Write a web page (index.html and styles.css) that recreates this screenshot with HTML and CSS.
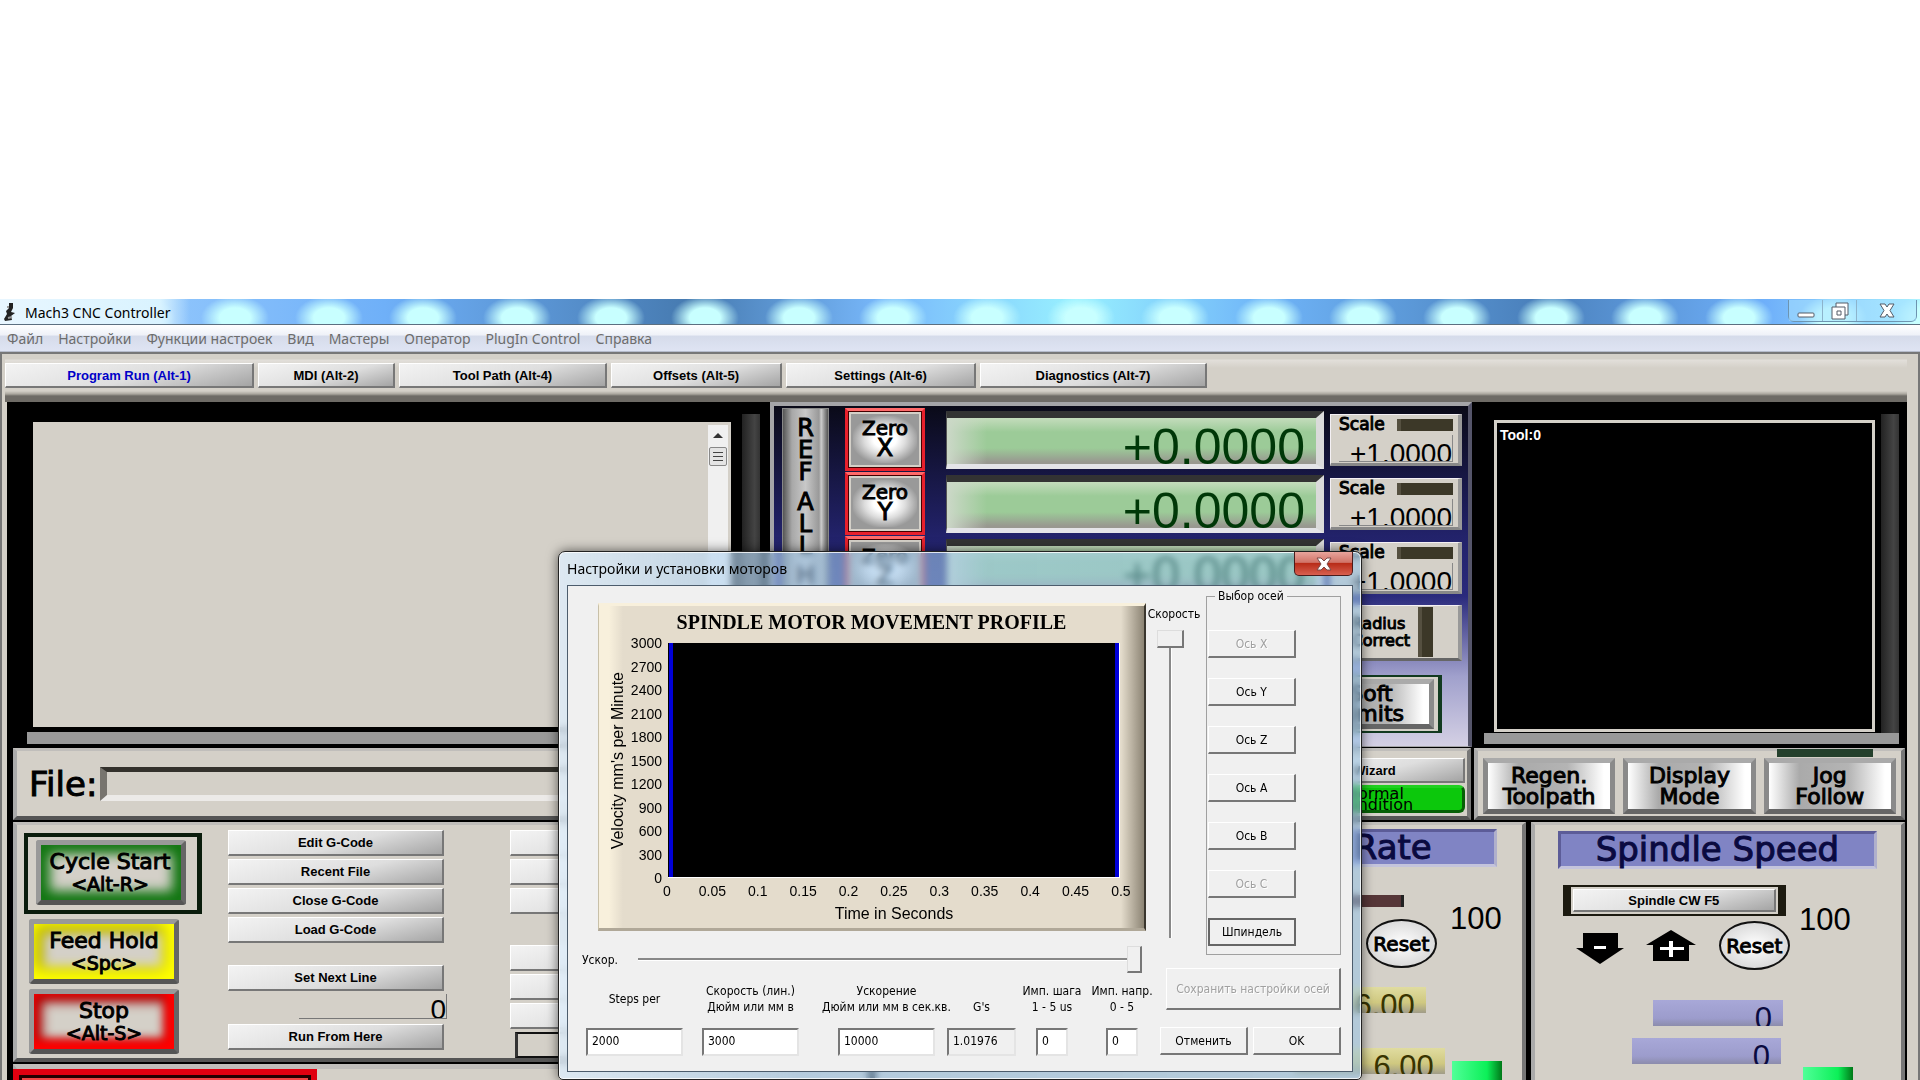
FILE: index.html
```html
<!DOCTYPE html>
<html lang="ru">
<head>
<meta charset="UTF-8">
<meta name="viewport" content="width=device-width, initial-scale=1.0">
<title>Mach3 CNC Controller</title>
<link rel="stylesheet" href="styles.css">
</head>
<body>
<div class="app">
    <header class="titlebar">
        <svg class="app-icon" width="14" height="20" viewBox="0 0 14 20"><path d="M6 1l4 0 0 5-2 4 4 1-4 3 1 4-7 1-1-2 3-5-1-3 3-3z" fill="#222"/><path d="M4 5l2 0M5 16l4-1" stroke="#999" stroke-width="2"/></svg>
        <h1>Mach3 CNC Controller</h1>
        <div class="win-controls">
            <button class="win-btn" aria-label="Minimize"><svg width="18" height="16" viewBox="0 0 18 16"><rect x="1" y="10" width="16" height="4" rx="1" fill="#fff" stroke="#555c68"/></svg></button>
            <button class="win-btn" aria-label="Restore"><svg width="18" height="18" viewBox="0 0 18 18"><g fill="#fff" stroke="#555c68"><path d="M5 1h12v12h-3v4H1V5h4z"/><path d="M5 5h9v8M6 9h4v4H6z"/></g></svg></button>
            <button class="win-btn win-close" aria-label="Close"><svg width="16" height="15" viewBox="0 0 16 15"><path d="M1 1h5l2 3 2-3h5l-4 6.500 4 6.500h-5l-2-3-2 3H1l4-6.500z" fill="#fff" stroke="#555c68"/></svg></button>
        </div>
    </header>
    <nav class="menubar">
        <a href="#">Файл</a>
        <a href="#">Настройки</a>
        <a href="#">Функции настроек</a>
        <a href="#">Вид</a>
        <a href="#">Мастеры</a>
        <a href="#">Оператор</a>
        <a href="#">PlugIn Control</a>
        <a href="#">Справка</a>
    </nav>

    <div class="frame">
        <div class="tabs">
            <button class="flat active">Program Run (Alt-1)</button>
            <button class="flat">MDI (Alt-2)</button>
            <button class="flat">Tool Path (Alt-4)</button>
            <button class="flat">Offsets (Alt-5)</button>
            <button class="flat">Settings (Alt-6)</button>
            <button class="flat">Diagnostics (Alt-7)</button>
        </div>

        <main class="screen">
            <div class="upper">
                <section class="well">
                    <div class="listing">
                        <div class="scroll">
                            <span class="scroll-up"></span>
                            <span class="scroll-thumb"></span>
                        </div>
                    </div>
                </section>

                <section class="dro-panel">
                    <button class="ref-all"><span>R</span><span>E</span><span>F</span><span class="word">A</span><span>L</span><span>L</span><span class="word">H</span></button>
                    <div class="axes">
                        <div class="axis">
                            <button class="zero"><span>Zero<br><b>X</b></span></button>
                            <div class="dro"><output>+0.0000</output></div>
                            <div class="scale"><span class="scale-name">Scale</span><i class="led"></i><output>+1.0000</output></div>
                        </div>
                        <div class="axis">
                            <button class="zero"><span>Zero<br><b>Y</b></span></button>
                            <div class="dro"><output>+0.0000</output></div>
                            <div class="scale"><span class="scale-name">Scale</span><i class="led"></i><output>+1.0000</output></div>
                        </div>
                        <div class="axis">
                            <button class="zero"><span>Zero<br><b>Z</b></span></button>
                            <div class="dro"><output>+0.0000</output></div>
                            <div class="scale"><span class="scale-name">Scale</span><i class="led"></i><output>+1.0000</output></div>
                        </div>
                        <div class="radius"><span>Radius<br>Correct</span><i class="led tall"></i></div>
                        <div class="soft"><button class="chrome">Soft<br>Limits</button></div>
                    </div>
                </section>

                <section class="well">
                    <div class="toolview">Tool:0</div>
                </section>
            </div>

            <div class="middle">
                <section class="panel file">
                    <label for="file">File:</label>
                    <input type="text" id="file" class="file-box">
                </section>
                <section class="panel wizard">
                    <button class="flat">Wizard</button>
                    <div class="condition">Normal<br>Condition</div>
                </section>
                <section class="panel view-btns">
                    <button class="chrome">Regen.<br>Toolpath</button>
                    <button class="chrome">Display<br>Mode</button>
                    <button class="chrome follow">Jog<br>Follow</button>
                </section>
            </div>

            <div class="lower">
                <div class="left-stack">
                    <section class="panel run">
                        <div class="run-col">
                            <div class="start-led"><button class="big green">Cycle Start<small>&lt;Alt-R&gt;</small></button></div>
                            <button class="big yellow">Feed Hold<small>&lt;Spc&gt;</small></button>
                            <button class="big red">Stop<small>&lt;Alt-S&gt;</small></button>
                        </div>
                        <div class="code-col">
                            <button class="flat">Edit G-Code</button>
                            <button class="flat">Recent File</button>
                            <button class="flat">Close G-Code</button>
                            <button class="flat">Load G-Code</button>
                            <button class="flat gap-top">Set Next Line</button>
                            <output class="line-no">0</output>
                            <button class="flat">Run From Here</button>
                        </div>
                        <div class="code-col toggles">
                            <button class="flat" aria-label="Rewind"></button>
                            <button class="flat" aria-label="Single block"></button>
                            <button class="flat" aria-label="Reverse run"></button>
                            <button class="flat gap-top" aria-label="Block delete"></button>
                            <button class="flat" aria-label="Optional stop"></button>
                            <button class="flat" aria-label="Flood"></button>
                            <i class="flood-led"></i>
                        </div>
                    </section>
                    <section class="panel reset-strip">
                        <div class="estop"></div>
                    </section>
                </div>

                <section class="panel rate">
                    <h2>Feed Rate</h2>
                    <i class="bar"></i>
                    <div class="override">
                        <button class="reset">Reset</button>
                        <output>100</output>
                    </div>
                    <output class="num yellow-num">6.00</output>
                    <output class="num yellow-num wide">6.00</output>
                    <i class="go"></i>
                </section>

                <section class="panel spindle">
                    <h2>Spindle Speed</h2>
                    <div class="cw"><button class="flat">Spindle CW F5</button></div>
                    <div class="override">
                        <button class="arrow" aria-label="Slower"><svg width="48" height="31" viewBox="0 0 48 31"><path d="M7 0h35v15h6L24 31 0 15h7z"/><path d="M18 13h12v3H18z" fill="#fff"/></svg></button>
                        <button class="arrow up" aria-label="Faster"><svg width="50" height="31" viewBox="0 0 50 31"><path d="M25 0l25 15h-7v16H7V15H0z"/><path d="M14 17h9v-6h4v6h11v3H27v7h-4v-7h-9z" fill="#fff"/></svg></button>
                        <button class="reset">Reset</button>
                        <output>100</output>
                    </div>
                    <output class="num blue-num">0</output>
                    <output class="num blue-num wide">0</output>
                    <i class="go"></i>
                </section>
            </div>
        </main>
    </div>
</div>

<div class="dialog" role="dialog" aria-labelledby="dlg-title">
    <div class="dialog-head">
        <span id="dlg-title">Настройки и установки моторов</span>
        <button class="dialog-close" aria-label="Закрыть"><svg width="16" height="14" viewBox="0 0 16 14"><path d="M1 1h4l3 3 3-3h4l-4 6 4 6h-4l-3-3-3 3H1l4-6z" fill="#fff" stroke="#7a4a48"/></svg></button>
    </div>
    <div class="dialog-body">
        <div class="motor">
            <div class="chart">
                <h3>SPINDLE MOTOR MOVEMENT PROFILE</h3>
                <div class="chart-grid">
                    <div class="y-name"><span>Velocity mm's per Minute</span></div>
                    <div class="y-axis">
                        <span>3000</span><span>2700</span><span>2400</span><span>2100</span><span>1800</span><span>1500</span><span>1200</span><span>900</span><span>600</span><span>300</span><span>0</span>
                    </div>
                    <div class="plot"></div>
                    <div class="x-axis">
                        <span>0</span><span>0.05</span><span>0.1</span><span>0.15</span><span>0.2</span><span>0.25</span><span>0.3</span><span>0.35</span><span>0.4</span><span>0.45</span><span>0.5</span>
                    </div>
                    <div class="x-name">Time in Seconds</div>
                </div>
            </div>
            <div class="accel">
                <label for="accel">Ускор.</label>
                <input type="range" id="accel" min="0" max="100" value="100">
            </div>
            <div class="fields">
                <div class="field"><label for="steps">Steps per</label><input type="text" id="steps" value="2000"></div>
                <div class="field"><label for="vel">Скорость (лин.)<br>Дюйм или мм в</label><input type="text" id="vel" value="3000"></div>
                <div class="field"><label for="acc">Ускорение<br>Дюйм или мм в сек.кв.</label><input type="text" id="acc" value="10000"></div>
                <div class="field gs"><label for="gs"><br>G's</label><input type="text" id="gs" value="1.01976" readonly></div>
                <div class="field tiny"><label for="pulse">Имп. шага<br>1 - 5 us</label><input type="text" id="pulse" value="0"></div>
                <div class="field tiny"><label for="dir">Имп. напр.<br>0 - 5</label><input type="text" id="dir" value="0"></div>
            </div>
        </div>
        <div class="side">
            <div class="side-top">
                <div class="speed">
                    <label for="speed">Скорость</label>
                    <input type="range" id="speed" min="0" max="100" value="100">
                </div>
                <fieldset>
                    <legend>Выбор осей</legend>
                    <button class="btn" disabled>Ось X</button>
                    <button class="btn">Ось Y</button>
                    <button class="btn">Ось Z</button>
                    <button class="btn">Ось A</button>
                    <button class="btn">Ось B</button>
                    <button class="btn" disabled>Ось C</button>
                    <button class="btn selected">Шпиндель</button>
                </fieldset>
            </div>
            <button class="btn save" disabled>Сохранить настройки осей</button>
            <div class="answers">
                <button class="btn">Отменить</button>
                <button class="btn">OK</button>
            </div>
        </div>
    </div>
</div>
</body>
</html>
```
FILE: styles.css
```css
* {
    box-sizing: border-box;
}
body {
    margin: 0;
    height: 100vh;
    overflow: hidden;
    background-color: #fff;
    color: #000;
    font-family: "Liberation Sans", Arial, sans-serif;
    position: relative;
}
h1, h2, h3 {
    margin: 0;
    font-weight: normal;
}
button {
    padding: 0;
    font-family: inherit;
    color: #000;
}
a {
    text-decoration: none;
}

/* main window */
.app {
    margin-top: 299px;
    height: calc(100vh - 299px);
    display: flex;
    flex-direction: column;
}
.titlebar {
    flex: none;
    height: 26px;
    display: flex;
    align-items: center;
    padding: 1px 0 0 3px;
    gap: 8px;
    border-bottom: 1px solid #5c6f80;
    background:
        linear-gradient(90deg, #e8f6ff 0, #d9f3ff 160px, transparent 190px),
        radial-gradient(ellipse 34px 22px at 50% 75%, #c8ffff 45%, transparent) 0 0 / 94px 100%,
        linear-gradient(90deg, #a6d4ff, #6fb0f8 20%, #467ab0 36%, #78b8fb 46%, #98f0ff 56%, #6fb4f8 66%, #4a80bb 80%, #6fb0fa 92%, #a8f0ff);
}
.titlebar h1 {
    flex: 1;
    font: 14px "Noto Sans", sans-serif;
}
.win-controls {
    align-self: flex-start;
    display: flex;
    height: 22px;
    margin-right: 3px;
    border: 1px solid #6d94b0;
    border-top: 0;
    border-radius: 0 0 6px 6px;
}
.win-btn {
    width: 34px;
    border: 0;
    border-right: 1px solid #8db4cc;
    background: rgba(170, 225, 255, 0.5);
    display: flex;
    align-items: center;
    justify-content: center;
}
.win-close {
    width: 59px;
    border-right: 0;
}
.menubar {
    flex: none;
    height: 27px;
    display: flex;
    gap: 15px;
    padding-left: 7px;
    line-height: 27px;
    font-family: "Noto Sans", sans-serif;
    font-size: 14px;
    background: linear-gradient(#fff, #eef1f8 38%, #d5dbea 40%, #dfe4f3 95%, #9ea4b4);
}
.menubar a {
    color: #6d6d6d;
}
.frame {
    flex: 1;
    min-height: 0;
    display: flex;
    flex-direction: column;
    border: solid #777;
    border-width: 2px 2px 0 2px;
    padding: 0 11px 0 5px;
    background-color: #d4d0c8;
}
.tabs {
    flex: none;
    display: grid;
    grid-template-columns: 249fr 137fr 208fr 171fr 190fr 227fr 696fr;
    gap: 4px;
    height: 48px;
    padding: 9px 0 14px;
    margin-left: -2px;
    background: linear-gradient(#d4d0c8 5px, #e2dfda 6px, #d4d0c8 14px, #d4d0c8 37px, #aaa69e 40px, #6e6b66 42px, #6e6b66);
}
.flat {
    font-weight: bold;
    font-size: 13px;
    border: 1px solid #fff;
    border-right: 2px solid #777;
    border-bottom: 2px solid #777;
    background: linear-gradient(165deg, #f3f3f3, #dedede 55%, #a4a4a4);
}
.tabs .active {
    color: #0000c8;
}

.screen {
    flex: 1;
    min-height: 0;
    display: flex;
    flex-direction: column;
    background-color: #000;
}
.upper {
    flex: none;
    height: 345px;
    display: grid;
    grid-template-columns: 763fr 702fr 435fr;
}
.well {
    padding: 20px 39px 15px 26px;
    background:
        linear-gradient(#999, #999) 20px 330px / calc(100% - 30px) 12px no-repeat,
        linear-gradient(90deg, #222, #444 70%, #333) right 10px top 12px / 18px 320px no-repeat,
        #000;
}
.well:last-child {
    padding: 18px 32px 15px 22px;
    background:
        linear-gradient(#999, #999) 12px 331px / calc(100% - 20px) 11px no-repeat,
        linear-gradient(90deg, #222, #444 70%, #333) right 8px top 12px / 18px 320px no-repeat,
        #000;
}
.listing {
    height: 305px;
    background-color: #d4d0c8;
    display: flex;
    justify-content: flex-end;
    padding: 3px 3px 0 0;
}
.scroll {
    width: 20px;
    background-color: #f0f0f0;
    display: flex;
    flex-direction: column;
    align-items: center;
}
.scroll-up {
    margin: 8px 0 9px;
    border: solid transparent;
    border-width: 0 5px 5px;
    border-bottom-color: #333;
}
.scroll-thumb {
    width: 18px;
    height: 19px;
    border: 1px solid #888;
    border-radius: 2px;
    background: repeating-linear-gradient(#444 0 1px, #e4e4e4 1px 4px) center / 10px 10px no-repeat, #e4e4e4;
}
.toolview {
    height: 312px;
    border: 3px solid #d4d0c8;
    padding: 4px 3px;
    color: #fff;
    font-weight: bold;
    font-size: 14px;
}

/* engraved lettering of the screen set */
.zero, .ref-all, .scale-name, .radius, .chrome, .file, .big, .reset, .panel h2 {
    font-family: "DejaVu Sans", sans-serif;
    font-weight: normal;
    -webkit-text-stroke: 1px currentColor;
}

/* axis read-outs */
.dro-panel {
    border: 4px solid #a5a5a8;
    border-right-color: #55556a;
    border-bottom-width: 1px;
    padding: 2px 6px 0 8px;
    display: flex;
    gap: 16px;
    background: linear-gradient(#0a0a18, #22226a 130px, #2a2a7c 190px, #a0a0cc 270px, #d4d0e4);
}
.ref-all {
    flex: none;
    width: 47px;
    height: 330px;
    display: flex;
    flex-direction: column;
    align-items: center;
    padding-top: 8px;
    border: 1px solid #888;
    font-size: 24px;
    line-height: 22px;
    background: linear-gradient(90deg, #555, #a8a8a8 20%, #c8c8c8 50%, #999 80%, #ccc 85%, #555);
}
.ref-all .word {
    margin-top: 8px;
}
.axes {
    flex: 1;
    display: flex;
    flex-direction: column;
    align-items: flex-end;
}
.axis {
    width: 100%;
    height: 64px;
    display: flex;
}
.zero {
    width: 80px;
    height: 63px;
    border: 3px solid #e8202c;
    border-top-color: #ff6a6a;
    padding: 3px;
    background-color: #d4d0c8;
    outline: 1px solid #400;
    outline-offset: -4px;
    font-size: 20px;
    line-height: 18px;
}
.zero span {
    display: block;
    height: 51px;
    padding-top: 3px;
    border: 2px solid #999;
    background: radial-gradient(#fff 25%, #ddd 45%, #999 75%);
}
.zero b {
    font-weight: normal;
    font-size: 24px;
    line-height: 22px;
}
.dro {
    flex: 1;
    height: 58px;
    margin: 3px 6px 0 21px;
    border: solid;
    border-color: #333 #dadada #e4e4e8 #555;
    border-width: 7px 8px 5px 1px;
    overflow: hidden;
    text-align: right;
    padding: 4px 11px 0 0;
    font-size: 50px;
    line-height: 50px;
    color: #003808;
    background:
        linear-gradient(90deg, #ccd8c8, transparent 40px),
        linear-gradient(#c4dcbc, #9ccb98 14px, #9ccb98 30px, #989890 44px);
}
.scale {
    width: 132px;
    height: 52px;
    margin-top: 6px;
    padding: 0 5px 0 8px;
    border: 1px solid #f4f0f4;
    border-right: 4px solid #999;
    border-bottom: 3px solid #888;
    display: flex;
    flex-wrap: wrap;
    justify-content: space-between;
    overflow: hidden;
    background-color: #d4d0c8;
}
.scale-name {
    font-size: 17px;
    line-height: 19px;
}
.led {
    width: 56px;
    height: 12px;
    margin-top: 4px;
    background-color: #3c3828;
    border-left: 4px solid #555040;
}
.scale output {
    width: 100%;
    height: 27px;
    overflow: hidden;
    font-size: 28px;
    line-height: 38px;
    text-align: right;
    border-right: 1px solid #888;
    border-bottom: 1px solid #888;
}
.radius {
    width: 180px;
    height: 56px;
    margin-top: 5px;
    padding-right: 25px;
    border: 1px solid #f4f0f4;
    border-right: 4px solid #999;
    border-bottom: 3px solid #666;
    display: flex;
    align-items: center;
    justify-content: flex-end;
    gap: 8px;
    background-color: #d4d0c8;
    font-size: 16px;
    line-height: 17px;
}
.led.tall {
    width: 15px;
    height: 50px;
    margin: 0;
}
.soft {
    margin: 14px 20px 0 0;
    width: 140px;
    height: 58px;
    border: 2px solid #123a20;
    border-right-width: 4px;
    padding: 2px 4px;
    background-color: #d4d0c8;
}
.soft .chrome {
    width: 100%;
    height: 50px;
    line-height: 20px;
}
.chrome {
    border: 5px solid #8a8a8a;
    border-top-color: #aaa;
    border-bottom-color: #666;
    font-size: 22px;
    line-height: 21px;
    background: linear-gradient(90deg, #fff, #aaa 25%, #b4b4b4 65%, #fff 95%);
}

/* file, wizard and view buttons */
.middle {
    flex: none;
    height: 72px;
    margin-top: 1px;
    padding: 0 2px 0 6px;
    display: grid;
    grid-template-columns: 982fr 476fr 432fr;
    gap: 3px;
}
.panel {
    border: 4px solid #aaa;
    border-top: 3px solid #c0bebb;
    border-bottom: 4px solid #555;
    border-right-color: #777;
    background-color: #d4d0c8;
}
.file {
    display: flex;
    align-items: center;
    padding-left: 12px;
    gap: 3px;
    font-size: 34px;
}
.file-box {
    flex: 1;
    height: 34px;
    border: solid;
    border-color: #33312c #aaa #eceae8 #77746e;
    border-width: 5px 0 6px 7px;
    background-color: #d4d0c8;
}
.wizard {
    padding: 7px 2px 0 0;
    display: flex;
    flex-direction: column;
    align-items: flex-end;
    gap: 2px;
}
.wizard .flat {
    width: 180px;
    height: 25px;
}
.condition {
    width: 180px;
    height: 28px;
    border-radius: 6px;
    border: 3px solid #066006;
    border-top-color: #20d020;
    background-color: #0cc80c;
    text-align: center;
    font: 16px/11px "DejaVu Sans", sans-serif;
}
.view-btns {
    display: grid;
    grid-template-columns: 1fr 1fr 1fr;
    gap: 8px;
    padding: 7px 5px 2px;
}
.follow {
    position: relative;
}
.follow::before {
    content: "";
    position: absolute;
    left: 8px;
    right: 18px;
    top: -14px;
    height: 8px;
    background-color: #24402c;
}

/* run controls */
.lower {
    flex: 1;
    min-height: 0;
    margin-top: 2px;
    padding: 0 2px 0 6px;
    display: grid;
    grid-template-columns: 857fr 650fr 374fr;
    gap: 5px;
}
.left-stack {
    display: flex;
    flex-direction: column;
    gap: 2px;
}
.run {
    height: 240px;
    display: flex;
    padding: 5px 7px 0;
}
.run-col {
    width: 178px;
    display: flex;
    flex-direction: column;
    gap: 5px;
    margin: 3px 26px 0 0;
}
.start-led {
    height: 81px;
    border: 4px solid #0a1c0c;
    border-right-width: 5px;
    padding: 3px 9px 3px 8px;
}
.big {
    width: 150px;
    height: 65px;
    margin-left: 5px;
    border: 5px solid #999;
    border-right-color: #666;
    border-bottom-color: #555;
    border-radius: 3px;
    font-size: 22px;
    line-height: 22px;
    white-space: nowrap;
}
.big small {
    display: block;
    font-size: 19px;
}
.start-led .big {
    margin-left: 0;
    text-indent: -2px;
}
.green {
    background: #d4d0c8;
    box-shadow: inset 0 0 12px 9px #127612;
}
.yellow {
    background: #d4d0c8;
    box-shadow: inset -4px -4px 14px 6px #ff0, inset 0 0 12px 9px #b0a800;
}
.red {
    background: #d4d0c8;
    box-shadow: inset -4px -4px 10px 5px #f00, inset 0 0 12px 8px #a00000;
}
.code-col {
    width: 216px;
    display: flex;
    flex-direction: column;
    gap: 4px;
    margin-right: 66px;
}
.code-col .flat {
    flex: none;
    height: 26px;
    margin-bottom: -1px;
}
.code-col .gap-top {
    margin-top: 19px;
}
.toggles .gap-top {
    margin-top: 28px;
}
.line-no {
    height: 25px;
    margin: 0 -3px 1px 71px;
    overflow: hidden;
    text-align: right;
    font-size: 28px;
    line-height: 31px;
    border-right: 1px solid #777;
    border-bottom: 1px solid #777;
}
.flood-led {
    height: 28px;
    margin-left: 5px;
    border: 2px solid #111;
    border-left: 3px solid #333;
}
.reset-strip {
    flex: 1;
    border-top-width: 5px;
}
.estop {
    width: 304px;
    height: 40px;
    margin-left: -4px;
    border: 6px solid #e00010;
    box-shadow: inset 0 0 0 3px #200, inset 0 0 0 6px #e44;
    background-color: #d4d0c8;
}

.panel h2 {
    height: 38px;
    border: 3px solid #5c5c98;
    border-right-color: #b0b0cc;
    border-bottom-color: #c4c4dc;
    background-color: #8084c4;
    color: #0a0a40;
    text-align: center;
    font-size: 34px;
    line-height: 30px;
    white-space: nowrap;
}
.rate, .spindle {
    display: flex;
    flex-direction: column;
    align-items: flex-end;
    border-bottom: 0;
}
.rate {
    padding: 4px 25px 0 0;
}
.rate h2 {
    width: 300px;
    margin-bottom: 28px;
}
.bar {
    width: 200px;
    height: 12px;
    margin-right: 93px;
    background-color: #563638;
    border-right: 3px solid #222;
}
.override {
    display: flex;
    align-items: flex-start;
}
.override output {
    width: 65px;
    height: 40px;
    text-align: right;
    font-size: 31px;
}
.reset {
    width: 71px;
    height: 49px;
    border: 2px solid #111;
    border-radius: 50%;
    font-size: 20px;
    background: radial-gradient(#fff, #ccc);
}
.rate .override {
    height: 86px;
    margin: -6px -5px 0 0;
}
.rate .override .reset {
    margin-top: 18px;
}
.num {
    flex: none;
    height: 26px;
    overflow: hidden;
    text-align: right;
    padding-right: 11px;
    font-size: 31px;
    line-height: 37px;
}
.yellow-num {
    width: 150px;
    margin-right: 71px;
    color: #383400;
    background: linear-gradient(#e0dca0, #cfc880 60%, #a09c88);
}
.yellow-num.wide {
    margin: 35px 52px 0 0;
}
.go {
    flex: none;
    width: 50px;
    height: 30px;
    background: linear-gradient(90deg, #50ff98, #0cf058 70%, #007818);
}
.rate .go {
    margin: -13px -5px 0 0;
}
.spindle {
    padding: 6px 24px 0 23px;
}
.spindle h2 {
    width: 100%;
}
.cw {
    width: 223px;
    height: 31px;
    align-self: flex-start;
    margin: 16px 0 0 5px;
    border: solid #1c1a10;
    border-width: 2px 8px;
    padding: 2px;
}
.cw .flat {
    width: 100%;
    height: 100%;
}
.spindle .override {
    height: 84px;
    width: 100%;
    padding-left: 18px;
}
.arrow {
    flex: none;
    width: 48px;
    border: 0;
    background: none;
    margin: 17px 22px 0 0;
}
.arrow.up {
    margin: 14px 25px 0 0;
}
.spindle .reset {
    flex: none;
    margin-top: 5px;
}
.spindle .override output {
    width: 61px;
    margin-top: -14px;
}
.blue-num {
    width: 130px;
    margin-right: 94px;
    color: #0a0a40;
    background: linear-gradient(#a8a8d8, #9c9ccc 70%, #8c8cac);
}
.blue-num.wide {
    width: 149px;
    margin: 12px 96px 0 0;
}
.spindle .go {
    margin: 3px 24px 0 0;
}

/* motor tuning dialog */
.dialog {
    position: absolute;
    top: 551px;
    left: 558px;
    width: 804px;
    height: 529px;
    padding: 0 8px 8px;
    border: 1px solid #222;
    border-radius: 7px 7px 5px 5px;
    background: linear-gradient(90deg, rgba(222, 236, 248, 0.85), rgba(160, 200, 235, 0.6) 30%, rgba(150, 195, 230, 0.55));
    backdrop-filter: blur(3px);
    box-shadow: 0 0 12px rgba(0, 0, 0, 0.6), inset 0 0 0 1px rgba(255, 255, 255, 0.8);
    font: 12px/16px "DejaVu Sans Condensed", "DejaVu Sans", sans-serif;
}
.dialog-head {
    height: 33px;
    display: flex;
    justify-content: space-between;
    font: 14px/34px "Noto Sans", sans-serif;
}
.dialog-close {
    width: 59px;
    height: 24px;
    border: 1px solid #4a1c1c;
    border-top: 0;
    border-radius: 0 0 5px 5px;
    background: linear-gradient(#e8a49c, #d07468 45%, #b82c18 50%, #d86050);
    display: flex;
    align-items: center;
    justify-content: center;
}
.dialog-body {
    height: 487px;
    display: flex;
    justify-content: space-between;
    padding: 0 11px 0 14px;
    border: 1px solid #4c5c6c;
    background-color: #f0f0f0;
    line-height: 16px;
}
.motor {
    width: 564px;
}
.chart {
    height: 328px;
    margin: 17px 0 15px 16px;
    padding-top: 4px;
    border: solid;
    border-color: #f8f0dc #3a362e #b0a898 #c8c0a8;
    border-width: 3px 2px 3px 1px;
    background: linear-gradient(90deg, #f8f0dc 10px, #e4dccc 24px, #e4dccc 522px, #8c8474);
}
.chart h3 {
    font: bold 20px/24px "Liberation Serif", serif;
    text-align: center;
}
.chart-grid {
    display: grid;
    grid-template-columns: 38px 31px 452px;
    grid-template-rows: 235px 24px 20px;
    font: 14px/16px "Liberation Sans", sans-serif;
    margin-top: 9px;
}
.y-name {
    display: flex;
    align-items: center;
    justify-content: center;
    font-size: 16px;
}
.y-name span {
    writing-mode: vertical-rl;
    transform: rotate(180deg);
    white-space: nowrap;
}
.y-axis {
    display: flex;
    flex-direction: column;
    justify-content: space-between;
    align-items: flex-end;
    margin: -8px 6px -8px -6px;
}
.plot {
    border: solid #fff;
    border-width: 0 1px 1px 0;
    background:
        linear-gradient(#0000d8, #0000d8) left 1px top / 4px 100% no-repeat,
        linear-gradient(#0000d8, #0000d8) right top / 4px 100% no-repeat,
        #000;
}
.x-axis {
    grid-column: 3;
    display: flex;
    justify-content: space-between;
    padding-top: 5px;
    margin: 0 -1px;
}
.x-axis span {
    width: 0;
    display: flex;
    justify-content: center;
}
.x-name {
    grid-column: 3;
    text-align: center;
    font-size: 16px;
    line-height: 24px;
}
input[type=range] {
    appearance: none;
    margin: 0;
    background: linear-gradient(#888 0 2px, #fff 2px) center / 100% 3px no-repeat;
}
input[type=range]::-webkit-slider-thumb {
    appearance: none;
    width: 15px;
    height: 27px;
    background-color: #f0f0f0;
    border: 1px solid #ddd;
    border-right: 2px solid #777;
    border-bottom: 2px solid #777;
}
.accel {
    height: 27px;
    display: flex;
    align-items: center;
    justify-content: space-between;
}
#accel {
    width: 504px;
    height: 27px;
    margin-right: 4px;
}
.fields {
    display: grid;
    grid-template-columns: 116px 136px 109px 89px 70px 32px;
    margin: 10px 0 0 4px;
}
.field {
    width: 97px;
    display: flex;
    flex-direction: column;
    align-items: center;
}
.gs {
    width: 69px;
}
.tiny {
    width: 32px;
}
.field label {
    height: 45px;
    display: flex;
    flex-direction: column;
    justify-content: center;
    padding-bottom: 13px;
    text-align: center;
    white-space: nowrap;
}
.field input {
    width: 100%;
    height: 28px;
    padding: 0 4px 2px;
    border: 2px solid #777;
    border-right-color: #e4e4e4;
    border-bottom-color: #e4e4e4;
    background-color: #fff;
    font: inherit;
}
.field input[readonly] {
    background-color: #f0f0f0;
}
.side {
    width: 195px;
    display: flex;
    flex-direction: column;
    align-items: flex-end;
}
.side-top {
    width: 100%;
    height: 370px;
    display: flex;
    justify-content: space-between;
}
.speed {
    width: 56px;
    padding-top: 20px;
    display: flex;
    flex-direction: column;
    align-items: center;
    gap: 8px;
}
#speed {
    writing-mode: vertical-lr;
    direction: rtl;
    width: 27px;
    height: 308px;
    margin-right: 8px;
    background: linear-gradient(90deg, #888 0 2px, #fff 2px) center / 3px 100% no-repeat;
}
#speed::-webkit-slider-thumb {
    width: 27px;
    height: 18px;
}
fieldset {
    width: 135px;
    height: 367px;
    margin: 2px 0 0;
    padding: 26px 1px 0;
    border: 1px solid #a0a0a0;
    display: flex;
    flex-direction: column;
    gap: 20px;
}
legend {
    margin-left: 7px;
    padding: 0 3px;
}
.btn {
    flex: none;
    width: 88px;
    height: 28px;
    border: 1px solid #fff;
    border-right: 2px solid #777;
    border-bottom: 2px solid #777;
    background-color: #f0f0f0;
    font: inherit;
}
.btn:disabled {
    color: #a0a0a0;
    text-shadow: 1px 1px #fff;
}
.btn.selected {
    border: 2px solid #666;
}
.save {
    width: 175px;
    height: 42px;
    margin: 12px 0 17px;
}
.answers {
    display: flex;
    gap: 5px;
}
```
